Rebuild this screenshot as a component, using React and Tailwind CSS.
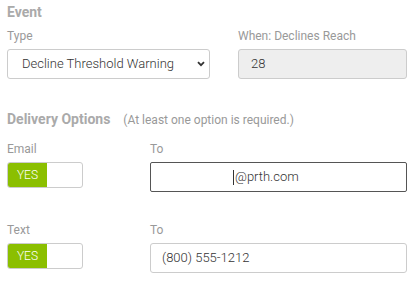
import React from "react";

function Toggle() {
  return (
    <div className="flex h-[26px] w-[76px] overflow-hidden rounded-[3px] border border-[#ccc] bg-white">
      <div className="flex w-[39px] items-center justify-center bg-[#8bbf00] text-[12px] font-light text-white">YES</div>
    </div>
  );
}

export default function App() {
  return (
    <div className="w-[414px] bg-white px-[7px] pt-[2px] text-[#555]" style={{ fontFamily: "Roboto, sans-serif" }}>
      <div className="text-[14px] font-bold leading-[20px] text-[#aaa]">Event</div>
      <div className="mt-[6px] flex gap-[28px]">
        <div className="w-[203px]">
          <div className="text-[12px] leading-[16px] text-[#999]">Type</div>
          <div className="mt-[5px] flex h-[30px] items-center justify-between rounded-[3px] border border-[#ccc] pl-[14px] pr-[4px] text-[13px] font-light text-[#333]">
            <span>Decline Threshold Warning</span>
            <svg width="8" height="6" viewBox="0 0 8 6"><path d="M1 1.2 L4 4.2 L7 1.2" stroke="#333" strokeWidth="1.8" fill="none" /></svg>
          </div>
        </div>
        <div className="w-[169px]">
          <div className="text-[12px] leading-[16px] text-[#999]">When: Declines Reach</div>
          <div className="mt-[5px] flex h-[30px] items-center rounded-[3px] border border-[#ccc] bg-[#eee] pl-[12px] text-[13px] font-light text-[#333]">28</div>
        </div>
      </div>

      <div className="mt-[30px] flex items-baseline">
        <span className="text-[14px] font-bold leading-[20px] text-[#aaa]">Delivery Options</span>
        <span className="ml-[13px] text-[12px] text-[#999]">(At least one option is required.)</span>
      </div>

      <div className="mt-[12px] flex">
        <div className="w-[143px]">
          <div className="text-[12px] leading-[16px] text-[#999]">Email</div>
          <div className="mt-[5px]"><Toggle /></div>
        </div>
        <div className="w-[257px]">
          <div className="text-[12px] leading-[16px] text-[#999]">To</div>
          <div className="mt-[5px] flex h-[30px] items-center rounded-[2px] border border-[#555] pl-[82px] text-[13px] font-light text-[#333]">
            <span className="mr-[1px] inline-block h-[15px] w-px bg-[#333]"></span>@prth.com
          </div>
        </div>
      </div>

      <div className="mt-[30px] flex">
        <div className="w-[143px]">
          <div className="text-[12px] leading-[16px] text-[#999]">Text</div>
          <div className="mt-[5px]"><Toggle /></div>
        </div>
        <div className="w-[257px]">
          <div className="text-[12px] leading-[16px] text-[#999]">To</div>
          <div className="mt-[5px] flex h-[30px] items-center rounded-[3px] border border-[#ccc] pl-[11px] text-[13px] font-light text-[#333]">(800) 555-1212</div>
        </div>
      </div>
    </div>
  );
}
